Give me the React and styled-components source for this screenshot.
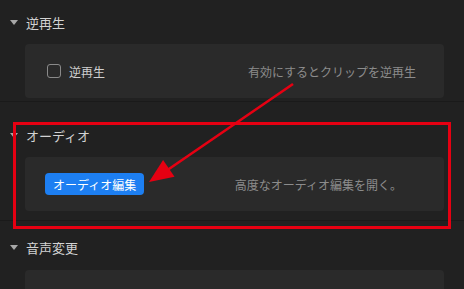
import React from "react";
import styled, { createGlobalStyle } from "styled-components";

const GlobalStyle = createGlobalStyle`
  html, body {
    margin: 0;
    padding: 0;
    background: #212121;
    overflow: hidden;
  }
  body {
    font-family: "Noto Sans CJK JP", "Noto Sans", sans-serif;
  }
`;

const Page = styled.div`
  position: relative;
  width: 464px;
  height: 289px;
  overflow: hidden;
  background: #212121;
`;

const Section = styled.section`
  display: flex;
  flex-direction: column;
  gap: ${(p) => p.$gap || 12}px;
  padding: ${(p) => p.$pt}px 20px ${(p) => p.$pb}px 25px;
  border-top: ${(p) => (p.$first ? "none" : "1px solid #1a1a1a")};
`;

const Header = styled.div`
  display: flex;
  align-items: center;
  height: 20px;
  margin-left: -15px;
  gap: 8px;
  color: #d2d2d2;
  font-size: 13px;
`;

const Caret = styled.span`
  width: 0;
  height: 0;
  border-left: 4.5px solid transparent;
  border-right: 4.5px solid transparent;
  border-top: 5px solid #a8a8a8;
`;

const Card = styled.div`
  display: flex;
  align-items: center;
  justify-content: space-between;
  height: 54px;
  box-sizing: border-box;
  padding: 0 ${(p) => p.$pr}px 0 ${(p) => p.$pl}px;
  background: #2a2a2a;
  border-radius: 4px;
`;

const CheckRow = styled.label`
  display: flex;
  align-items: center;
  gap: 8px;
  color: #cfcfcf;
  font-size: 12px;
`;

const Box = styled.span`
  width: 12px;
  height: 12px;
  border: 1px solid #8a8a8a;
  border-radius: 3px;
`;

const Desc = styled.span`
  color: #8c8c8c;
  font-size: 12px;
`;

const Button = styled.button`
  height: 22px;
  padding: 0 8px;
  border: none;
  border-radius: 4px;
  background: #1d7ff2;
  color: #ffffff;
  font-family: inherit;
  font-size: 12px;
`;

const Highlight = styled.div`
  position: absolute;
  left: 13px;
  top: 122px;
  width: 438px;
  height: 107px;
  box-sizing: border-box;
  border: 3px solid #e60012;
  pointer-events: none;
`;

const Overlay = styled.svg`
  position: absolute;
  left: 0;
  top: 0;
  pointer-events: none;
`;

export default function App() {
  return (
    <Page>
      <GlobalStyle />
      <Section $first $pt={12} $pb={3}>
        <Header>
          <Caret />
          逆再生
        </Header>
        <Card $pl={22} $pr={28}>
          <CheckRow>
            <Box />
            逆再生
          </CheckRow>
          <Desc>有効にするとクリップを逆再生</Desc>
        </Card>
      </Section>
      <Section $pt={23} $pb={9}>
        <Header>
          <Caret />
          オーディオ
        </Header>
        <Card $pl={20} $pr={42}>
          <Button>オーディオ編集</Button>
          <Desc>高度なオーディオ編集を開く。</Desc>
        </Card>
      </Section>
      <Section $pt={16} $pb={0} $gap={13}>
        <Header>
          <Caret />
          音声変更
        </Header>
        <Card $pl={20} $pr={28} />
      </Section>

      <Highlight />
      <Overlay width="464" height="289" viewBox="0 0 464 289">
        <line x1="293" y1="84" x2="166" y2="171" stroke="#e60012" strokeWidth="2.6" />
        <polygon points="149,182 174.5,176.7 163.1,160.1" fill="#e60012" />
      </Overlay>
    </Page>
  );
}
